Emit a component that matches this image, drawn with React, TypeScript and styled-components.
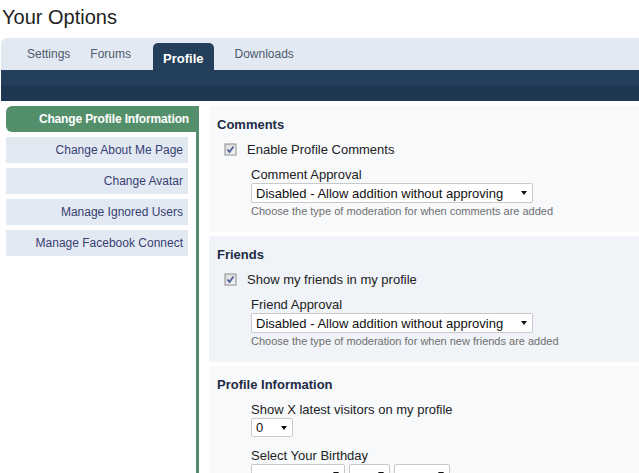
import styled, { createGlobalStyle } from 'styled-components';

const GlobalStyle = createGlobalStyle`
  html, body {
    margin: 0;
    padding: 0;
    background: #ffffff;
  }
  body {
    font-family: "Liberation Sans", Arial, sans-serif;
    overflow: hidden;
  }
`;

const Page = styled.div`
  width: 639px;
  display: flex;
  flex-direction: column;
`;

const PageTitle = styled.h1`
  margin: 0;
  padding: 5px 0 0 2px;
  font-size: 20px;
  line-height: 24px;
  font-weight: normal;
  color: #222222;
`;

const TabBar = styled.div`
  display: flex;
  align-items: flex-end;
  height: 32px;
  margin: 9px 0 0 1px;
  padding-left: 16px;
  background-color: #e3e9f2;
  border-radius: 6px 0 0 0;
`;

const Tab = styled.div<{ $active?: boolean }>`
  padding: 0 10px;
  margin: ${(p) => (p.$active ? '0 11px 0 12px' : '0')};
  font-size: ${(p) => (p.$active ? '13px' : '12px')};
  font-weight: ${(p) => (p.$active ? 'bold' : 'normal')};
  color: ${(p) => (p.$active ? '#ffffff' : '#4e5a6e')};
  background-color: ${(p) => (p.$active ? '#243f5c' : 'transparent')};
  border-radius: ${(p) => (p.$active ? '5px 5px 0 0' : '0')};
  height: ${(p) => (p.$active ? '27px' : '32px')};
  line-height: ${(p) => (p.$active ? '31px' : '33px')};
  box-sizing: border-box;
`;

const NavStrip = styled.div`
  height: 31px;
  margin-left: 1px;
  background: linear-gradient(to bottom, #243f5c 0, #243f5c 15px, #1e3752 16px, #1e3752 100%);
`;

const Body = styled.div`
  display: flex;
  align-items: stretch;
  margin-top: 5px;
`;

const Sidebar = styled.div`
  display: flex;
  flex-direction: column;
  gap: 5px;
  width: 190px;
  margin-left: 6px;
  border-right: 3px solid #548f6c;
  min-height: 380px;
`;

const SideItem = styled.div<{ $active?: boolean }>`
  height: 26px;
  line-height: 27px;
  width: ${(p) => (p.$active ? '190px' : '182px')};
  box-sizing: border-box;
  padding-right: ${(p) => (p.$active ? '7px' : '5px')};
  text-align: right;
  font-size: 12px;
  font-weight: ${(p) => (p.$active ? 'bold' : 'normal')};
  letter-spacing: ${(p) => (p.$active ? '-0.15px' : '0')};
  color: ${(p) => (p.$active ? '#ffffff' : '#373f73')};
  background-color: ${(p) => (p.$active ? '#548f6c' : '#e3e9f2')};
  border-radius: ${(p) => (p.$active ? '6px 0 0 6px' : '0')};
`;

const Content = styled.div`
  flex: 1;
  margin-left: 10px;
  display: flex;
  flex-direction: column;
  gap: 4px;
`;

const Section = styled.div<{ $tint?: boolean }>`
  background-color: ${(p) => (p.$tint ? '#f0f3f7' : '#f8f9fb')};
  padding: 11px 8px 14px 8px;
`;

const SectionTitle = styled.div`
  font-size: 13px;
  line-height: 16px;
  font-weight: bold;
  color: #1d2b45;
`;

const CheckRow = styled.div`
  display: flex;
  align-items: center;
  margin: 8px 0 0 7px;
  height: 16px;
  font-size: 13px;
  color: #222222;
`;

const CheckText = styled.span`
  margin-left: 10px;
`;

const Field = styled.div<{ $gap?: number }>`
  margin: ${(p) => p.$gap ?? 10}px 0 0 34px;
  display: flex;
  flex-direction: column;
  align-items: flex-start;
`;

const FieldLabel = styled.div`
  font-size: 13px;
  line-height: 16px;
  color: #222222;
`;

const Help = styled.div`
  font-size: 11px;
  line-height: 14px;
  margin-top: 1px;
  color: #6f6f6f;
`;

const SelectRow = styled.div`
  display: flex;
  gap: 4px;
`;

const SelectBox = styled.div<{ $w: number; $h?: number }>`
  width: ${(p) => p.$w}px;
  height: ${(p) => p.$h ?? 20}px;
  box-sizing: border-box;
  border: 1px solid #c9c9c9;
  border-radius: 2px;
  background-color: #ffffff;
  display: flex;
  align-items: center;
  justify-content: space-between;
  padding: 0 5px 0 4px;
  font-size: 13px;
  color: #111111;
  white-space: nowrap;
`;

const Caret = styled.span`
  width: 0;
  height: 0;
  border-left: 3.5px solid transparent;
  border-right: 3.5px solid transparent;
  border-top: 4px solid #111111;
  margin-left: 8px;
`;

function Checkbox() {
  return (
    <svg width="13" height="13" viewBox="0 0 13 13">
      <defs>
        <linearGradient id="cbg" x1="0" y1="0" x2="1" y2="1">
          <stop offset="0" stopColor="#dcdcdc" />
          <stop offset="1" stopColor="#f4f4f4" />
        </linearGradient>
      </defs>
      <rect x="0.5" y="0.5" width="12" height="12" fill="#8e8f8f" />
      <rect x="1.5" y="1.5" width="10" height="10" fill="url(#cbg)" />
      <path d="M3.5 6.5 L5.5 9 L9.5 3.5" fill="none" stroke="#4a5f9c" strokeWidth="1.8" />
    </svg>
  );
}

function Select({ value, width, height }: { value: string; width: number; height?: number }) {
  return (
    <SelectBox $w={width} $h={height}>
      <span>{value}</span>
      <Caret />
    </SelectBox>
  );
}

const sideItems = [
  'Change Profile Information',
  'Change About Me Page',
  'Change Avatar',
  'Manage Ignored Users',
  'Manage Facebook Connect',
];

export default function App() {
  return (
    <>
      <GlobalStyle />
      <Page>
        <PageTitle>Your Options</PageTitle>
        <TabBar>
          <Tab>Settings</Tab>
          <Tab>Forums</Tab>
          <Tab $active>Profile</Tab>
          <Tab>Downloads</Tab>
        </TabBar>
        <NavStrip />
        <Body>
          <Sidebar>
            {sideItems.map((item, i) => (
              <SideItem key={item} $active={i === 0}>
                {item}
              </SideItem>
            ))}
          </Sidebar>
          <Content>
            <Section>
              <SectionTitle>Comments</SectionTitle>
              <CheckRow>
                <Checkbox />
                <CheckText>Enable Profile Comments</CheckText>
              </CheckRow>
              <Field>
                <FieldLabel>Comment Approval</FieldLabel>
                <Select value="Disabled - Allow addition without approving" width={282} />
                <Help>Choose the type of moderation for when comments are added</Help>
              </Field>
            </Section>
            <Section $tint>
              <SectionTitle>Friends</SectionTitle>
              <CheckRow>
                <Checkbox />
                <CheckText>Show my friends in my profile</CheckText>
              </CheckRow>
              <Field>
                <FieldLabel>Friend Approval</FieldLabel>
                <Select value="Disabled - Allow addition without approving" width={282} />
                <Help>Choose the type of moderation for when new friends are added</Help>
              </Field>
            </Section>
            <Section>
              <SectionTitle>Profile Information</SectionTitle>
              <Field $gap={9}>
                <FieldLabel>Show X latest visitors on my profile</FieldLabel>
                <Select value="0" width={42} height={19} />
              </Field>
              <Field $gap={11}>
                <FieldLabel>Select Your Birthday</FieldLabel>
                <SelectRow>
                  <Select value="" width={94} />
                  <Select value="" width={41} />
                  <Select value="" width={56} />
                </SelectRow>
              </Field>
            </Section>
          </Content>
        </Body>
      </Page>
    </>
  );
}
